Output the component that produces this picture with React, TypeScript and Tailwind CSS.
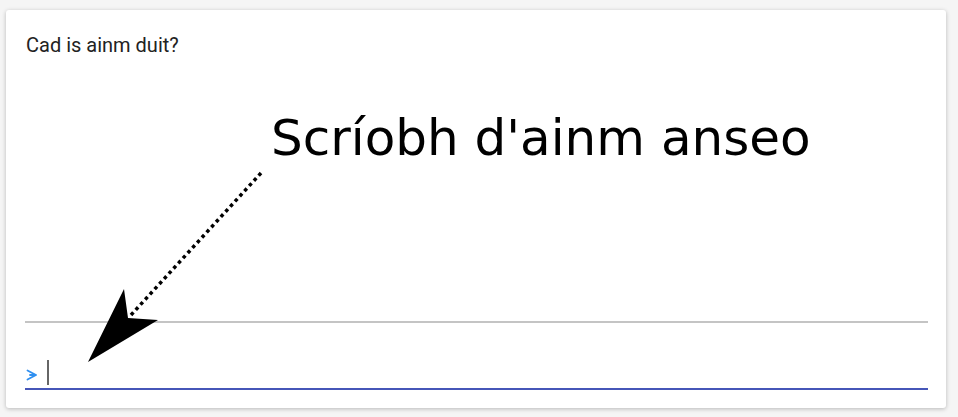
import React from "react";

export default function App() {
  return (
    <div className="relative w-[958px] h-[417px] bg-[#f5f5f5] pl-[6px] pt-[10px]" style={{ fontFamily: "Roboto, sans-serif" }}>
      <div className="w-[940px] h-[398px] bg-white rounded-[3px] shadow-[0_1px_4px_rgba(0,0,0,0.25)] flex flex-col pl-[19px] pr-[18px] pb-[18px]">
        <div className="pt-[25px] pl-[1px] text-[20px] leading-[20px] text-[#222]">Cad is ainm duit?</div>
        <div className="flex-1" />
        <div className="h-[2px] bg-[#c4c4c4]" />
        <div className="h-[65px] flex items-end pb-[3px]">
          <div className="flex items-center h-[25px]">
            <svg width="12" height="12" viewBox="0 0 12 12" className="ml-[1px] mt-[4px]">
              <path d="M1.5 1.5 L10 6 L1.5 10.5 M10 6 L4 6" stroke="#2f8ff0" strokeWidth="1.8" fill="none" strokeLinejoin="round" strokeLinecap="round" />
            </svg>
            <div className="ml-[9px] w-[2px] h-[25px] bg-[#666]" />
          </div>
        </div>
        <div className="h-[2px] bg-[#4656b8]" />
      </div>
      <div className="absolute left-[271px] top-[108px] text-[50px] leading-[60px] text-black" style={{ fontFamily: "'DejaVu Sans', sans-serif" }}>
        Scríobh d'ainm anseo
      </div>
      <svg className="absolute left-0 top-0" width="958" height="417">
        <line x1="261" y1="173" x2="131" y2="315" stroke="black" strokeWidth="3.5" strokeDasharray="3.5 3.5" />
        <polygon points="88,362 124,289 128,318 158,320" fill="black" />
      </svg>
    </div>
  );
}
